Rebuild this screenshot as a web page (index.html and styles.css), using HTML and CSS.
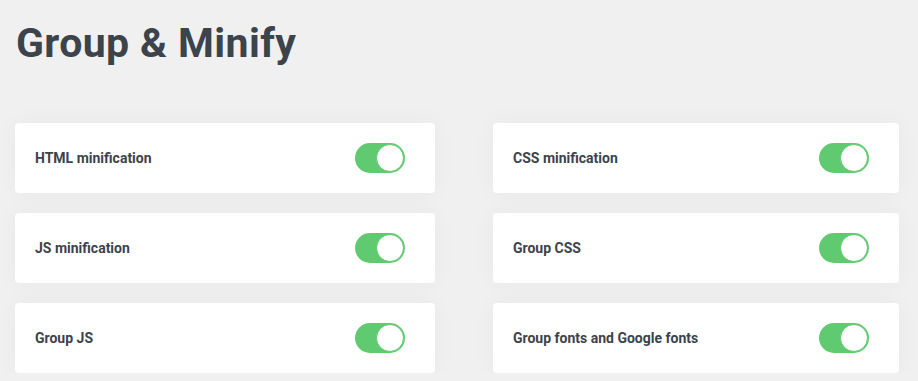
FILE: index.html
```html
<!DOCTYPE html>
<html lang="en">
<head>
    <meta charset="UTF-8">
    <meta name="viewport" content="width=device-width, initial-scale=1.0">
    <title>Group &amp; Minify</title>
    <link rel="stylesheet" href="styles.css">
</head>
<body>
    <div class="page">
        <h1>Group &amp; Minify</h1>

        <div class="options">
            <div class="option">
                <span class="label">HTML minification</span>
                <label class="switch"><input type="checkbox" checked><span class="slider"></span></label>
            </div>
            <div class="option">
                <span class="label">CSS minification</span>
                <label class="switch"><input type="checkbox" checked><span class="slider"></span></label>
            </div>
            <div class="option">
                <span class="label">JS minification</span>
                <label class="switch"><input type="checkbox" checked><span class="slider"></span></label>
            </div>
            <div class="option">
                <span class="label">Group CSS</span>
                <label class="switch"><input type="checkbox" checked><span class="slider"></span></label>
            </div>
            <div class="option">
                <span class="label">Group JS</span>
                <label class="switch"><input type="checkbox" checked><span class="slider"></span></label>
            </div>
            <div class="option">
                <span class="label">Group fonts and Google fonts</span>
                <label class="switch"><input type="checkbox" checked><span class="slider"></span></label>
            </div>
        </div>
    </div>
</body>
</html>
```

FILE: styles.css
```css
body {
    font-family: Roboto, "Liberation Sans", Arial, sans-serif;
    margin: 0;
    padding: 0;
    background-color: #f0f0f1;
    color: #3c434a;
}

.page {
    padding: 23px 19px 0 15px;
}

h1 {
    margin: 0 0 0 1px;
    font-size: 41px;
    font-weight: 700;
    line-height: 41px;
    letter-spacing: 0.4px;
}

.options {
    display: grid;
    grid-template-columns: 420px 406px;
    column-gap: 58px;
    row-gap: 20px;
    margin-top: 59px;
}

.option {
    display: flex;
    align-items: center;
    justify-content: space-between;
    height: 70px;
    padding: 0 30px 0 20px;
    box-sizing: border-box;
    background-color: #ffffff;
    border-radius: 4px;
    box-shadow: 0 0 24px rgba(0, 0, 0, 0.04);
}

.label {
    font-size: 14px;
    font-weight: 700;
}

.switch {
    position: relative;
    display: inline-block;
    width: 50px;
    height: 30px;
}

.switch input {
    display: none;
}

.slider {
    position: absolute;
    inset: 0;
    border-radius: 15px;
    background-color: #5fca70;
    cursor: pointer;
}

.slider::before {
    content: "";
    position: absolute;
    top: 1px;
    right: 1px;
    width: 26px;
    height: 26px;
    border-radius: 50%;
    background-color: #ffffff;
    border: 1px solid #5fca70;
}
```
